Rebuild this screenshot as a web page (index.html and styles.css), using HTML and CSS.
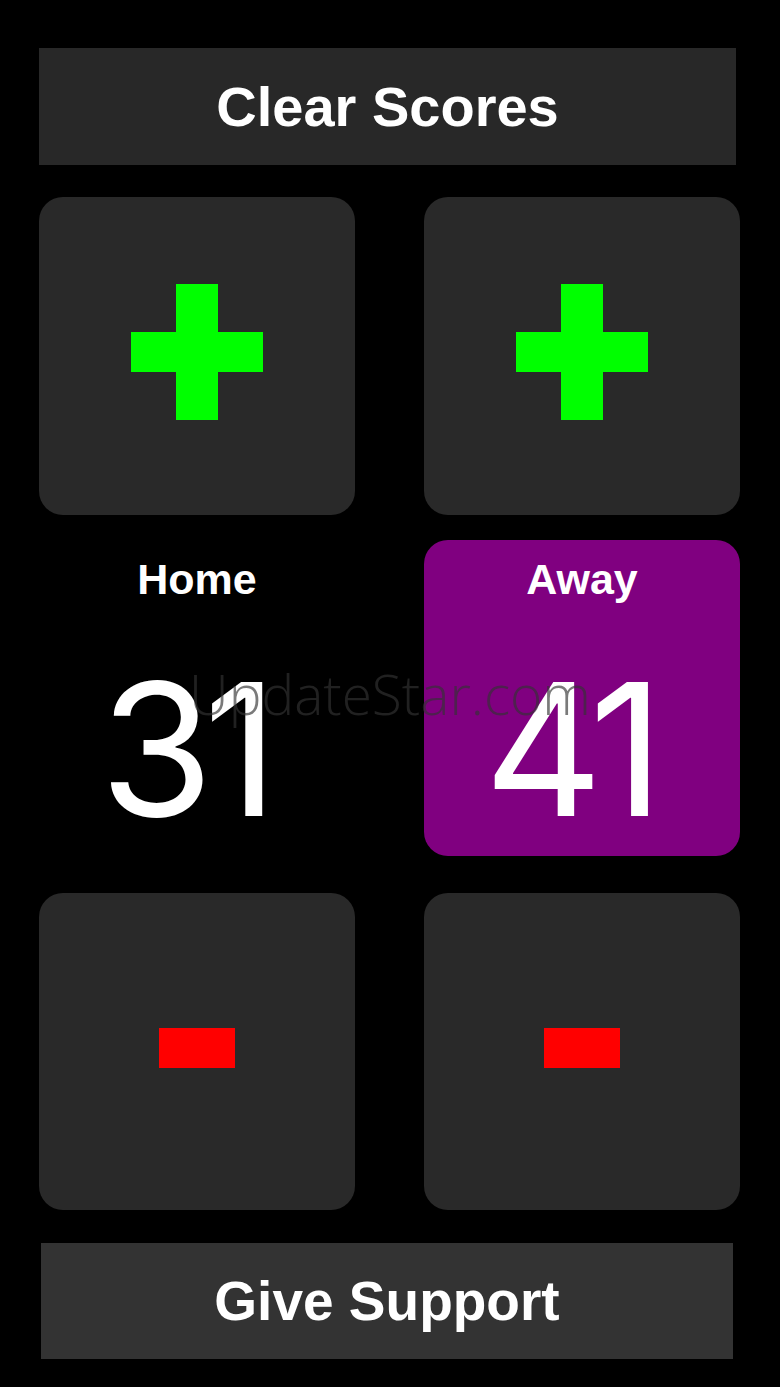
FILE: index.html
```html
<!DOCTYPE html>
<html lang="en">
<head>
<meta charset="utf-8">
<title>Scoreboard</title>
<link rel="stylesheet" href="styles.css">
</head>
<body>
<div class="app">
  <div class="bar bar-clear">Clear Scores</div>
  <div class="grid">
    <div class="card btn-plus"><span class="plus"></span></div>
    <div class="card btn-plus"><span class="plus"></span></div>
    <div class="team">
      <div class="label">Home</div>
      <div class="score">31</div>
    </div>
    <div class="team team-active">
      <div class="label">Away</div>
      <div class="score">41</div>
    </div>
    <div class="card btn-minus"><span class="minus"></span></div>
    <div class="card btn-minus"><span class="minus"></span></div>
  </div>
  <div class="bar bar-support">Give Support</div>
  <div class="watermark">UpdateStar.com</div>
</div>
</body>
</html>
```
FILE: styles.css
```css
html, body {
  margin: 0;
  padding: 0;
  background: #000;
}
.app {
  position: relative;
  width: 780px;
  height: 1387px;
  padding-top: 48px;
  box-sizing: border-box;
  font-family: "Liberation Sans", Arial, sans-serif;
  color: #fff;
}
.bar {
  display: flex;
  align-items: center;
  justify-content: center;
  font-weight: bold;
  line-height: 1;
}
.bar-clear {
  margin-left: 39px;
  width: 697px;
  height: 117px;
  background: #282828;
  font-size: 56px;
}
.bar-support {
  margin-top: 33px;
  margin-left: 41px;
  width: 692px;
  height: 116px;
  background: #333333;
  font-size: 55px;
}
.grid {
  margin-top: 32px;
  margin-left: 39px;
  display: grid;
  grid-template-columns: 316px 316px;
  grid-template-rows: 318px 341px 354px;
  column-gap: 69px;
}
.card {
  background: #292929;
  border-radius: 24px;
  display: flex;
  align-items: center;
  justify-content: center;
  box-sizing: border-box;
}
.btn-plus {
  padding-bottom: 8px;
}
.plus {
  position: relative;
  display: block;
  width: 132px;
  height: 136px;
}
.plus::before, .plus::after {
  content: "";
  position: absolute;
  background: #00ff00;
}
.plus::before {
  left: 45px;
  top: 0;
  width: 42px;
  height: 136px;
}
.plus::after {
  left: 0;
  top: 48px;
  width: 132px;
  height: 40px;
}
.team {
  margin-top: 25px;
  height: 316px;
  border-radius: 24px;
  display: flex;
  flex-direction: column;
  align-items: center;
  box-sizing: border-box;
  padding-top: 18px;
}
.team-active {
  background: #800080;
}
.grid > .btn-minus {
  margin-top: 37px;
  height: 317px;
  padding-bottom: 8px;
}
.label {
  font-size: 43px;
  font-weight: bold;
  line-height: 1;
}
.score {
  margin-top: 56px;
  margin-right: 26px;
  font-family: Inter, "Liberation Sans", sans-serif;
  font-size: 184px;
  letter-spacing: -10px;
  line-height: 1;
  font-weight: 400;
}
.minus {
  display: block;
  width: 76px;
  height: 40px;
  background: #ff0000;
}
.watermark {
  position: absolute;
  left: 0;
  right: 0;
  top: 661px;
  text-align: center;
  font-family: "Open Sans", sans-serif;
  font-size: 55px;
  font-weight: 300;
  line-height: 1.2;
  color: rgba(50, 50, 50, 0.65);
}
```
